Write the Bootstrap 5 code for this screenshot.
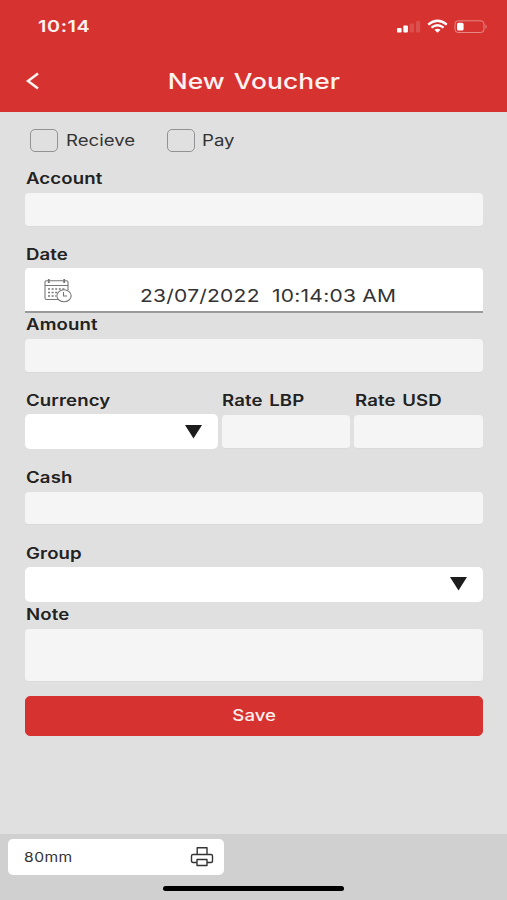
<!DOCTYPE html>
<html lang="en">
<head>
<meta charset="utf-8">
<meta name="viewport" content="width=device-width, initial-scale=1">
<title>New Voucher</title>
<link href="https://cdn.jsdelivr.net/npm/bootstrap@5.3.0/dist/css/bootstrap.min.css" rel="stylesheet">
<style>
  body { font-family: Inter, "Liberation Sans", sans-serif; background: #e0e0e0; color: #222; height: 900px; overflow: hidden; }
  .screen { height: 900px; }
  .top-area { background: #d63230; color: #fff3f1; height: 111.5px; }
  .status-row { height: 52px; padding: 0 19px 0 38px; }
  .title-row { height: 58px; padding: 0 24px; }
  /* wide-set lettering */
  .wide { display: inline-block; transform: scaleX(1.2); transform-origin: left center; white-space: pre; }
  .wide-mid { transform-origin: center; }
  .clock { font-size: 16.5px; font-weight: 600; letter-spacing: .5px; }
  .page-title { font-size: 22px; font-weight: 500; line-height: 28px; word-spacing: 1.5px; letter-spacing: .05px; padding-right: 18px; }
  .form-area { padding: 17px 24.5px 0 25px; }
  .choices { height: 24px; padding-left: 5px; }
  .choice { width: 136.5px; font-size: 15.5px; line-height: 24px; color: #333; }
  .tick-box { width: 28px; height: 23.5px; border: 1.5px solid #929292; border-radius: 5px; margin-right: 7.5px; background: #e0e0e0; }
  .field-label { display: block; height: 22px; line-height: 24px; font-size: 15.5px; font-weight: 600; margin: 0 0 4px .5px; letter-spacing: .1px; word-spacing: 1.5px; white-space: nowrap; }
  .label-tight { margin-bottom: 3px; }
  .first-gap { margin-top: 14.5px; }
  .after-gap { margin-top: 16.5px; }
  .note-gap { margin-top: 1px; }
  .entry { background: #f5f5f5; height: 33.5px; border: 0; border-bottom: 1px solid #dadada; border-radius: 4px; box-sizing: border-box; }
  .pick { background: #fff; height: 35px; border-radius: 5px; }
  .date-box { background: #fff; height: 45px; border-radius: 4px 4px 0 0; border-bottom: 2px solid #979a99; padding-left: 19px; }
  .date-icon { margin-top: 8.5px; }
  .date-text { font-size: 17.5px; line-height: 22px; color: #333; margin: 17px 0 0 66px; letter-spacing: .2px; }
  .currency-row { gap: 4px; margin-top: 16.9px; }
  .col-currency { width: 193px; }
  .col-rate { width: 128.5px; }
  .memo { height: 53.5px; }
  .save { --bs-btn-color: #fff0ee; --bs-btn-bg: #d63230; --bs-btn-border-color: #d63230; height: 40px; border-radius: 5px; font-size: 15.5px; font-weight: 500; padding: 0; line-height: 36px; margin-top: 13.5px; }
  .bottom-area { background: #d0d0d0; height: 66.5px; padding: 5.5px 8px 0; }
  .paper { width: 216px; height: 35.5px; background: #fff; border-radius: 5px; padding: 1px 10px 0 16px; font-size: 13px; color: #333; }
  .paper .wide { letter-spacing: .4px; }
  .home-bar { width: 181px; height: 5.5px; border-radius: 3px; background: #000; margin: 11px auto 0; }
</style>
<script src="https://cdn.jsdelivr.net/npm/bootstrap@5.3.0/dist/js/bootstrap.bundle.min.js"></script>
</head>
<body>
<div class="screen d-flex flex-column">
  <header class="top-area">
    <div class="status-row d-flex align-items-center justify-content-between">
      <span class="wide clock">10:14</span>
      <svg width="92" height="16" viewBox="0 0 92 16">
        <g fill="#fff"><rect x="1" y="10" width="4.6" height="4.5" rx="1"/><rect x="7.3" y="7.5" width="4.6" height="7" rx="1"/></g>
        <g fill="#fff" opacity=".14"><rect x="13.7" y="5.5" width="4.2" height="9" rx="1"/><rect x="20" y="3" width="4.2" height="11.5" rx="1"/></g>
        <g fill="none" stroke="#fff" stroke-width="2.3"><path d="M32.2 6.6Q41.5-1 50.8 6.6"/><path d="M35.4 9.7Q41.5 4.9 47.6 9.7"/></g>
        <path d="M38.4 11.8Q41.5 9.5 44.6 11.8L41.5 14.8Z" fill="#fff"/>
        <rect x="59" y="2.8" width="29" height="11.7" rx="3.2" fill="none" stroke="#fff" stroke-opacity=".42"/>
        <rect x="61" y="4.8" width="6.6" height="7.8" rx="1.6" fill="#fff"/>
        <path d="M89.6 6.2Q91.6 8.6 89.6 11Z" fill="#fff" fill-opacity=".5"/>
      </svg>
    </div>
    <div class="title-row d-flex align-items-center">
      <svg width="18" height="20" viewBox="0 0 18 20"><path d="M14 2.4 4 10l10 7.6" fill="none" stroke="#fff3f1" stroke-width="2.5"/></svg>
      <h1 class="page-title flex-fill text-center m-0"><span class="wide wide-mid">New Voucher</span></h1>
    </div>
  </header>

  <main class="form-area flex-fill">
    <div class="choices d-flex">
      <div class="choice d-flex align-items-center"><span class="tick-box"></span><span class="wide">Recieve</span></div>
      <div class="choice d-flex align-items-center"><span class="tick-box"></span><span class="wide">Pay</span></div>
    </div>
    <div class="first-gap"><label class="field-label"><span class="wide">Account</span></label><div class="entry"></div></div>
    <div class="after-gap"><label class="field-label label-tight"><span class="wide">Date</span></label>
      <div class="date-box d-flex">
        <svg class="date-icon" width="30" height="28" viewBox="0 0 30 28" fill="none" stroke="#777" stroke-width="1.1">
          <path d="M16.5 22.5H2.5Q1 22.5 1 21V5Q1 3.8 2.5 3.8H22.5Q24 3.8 24 5V13M1 8.5H24"/>
          <path d="M4.8 2v4M20.2 2v4" stroke-width="1.8"/>
          <path d="M4 12h17M4 15.5h10M4 19h8" stroke-width="1.6" stroke-dasharray="2 1.6"/>
          <ellipse cx="20" cy="18.8" rx="7.2" ry="6" fill="#fff"/>
          <path d="M19.5 15v4h3.6"/>
        </svg>
        <div class="date-text"><span class="wide">23/07/2022  10:14:03 AM</span></div>
      </div>
    </div>
    <div><label class="field-label"><span class="wide">Amount</span></label><div class="entry"></div></div>
    <div class="currency-row d-flex">
      <div class="col-currency"><label class="field-label label-tight"><span class="wide">Currency</span></label>
        <div class="pick d-flex align-items-center justify-content-end pe-3"><svg width="17" height="14" viewBox="0 0 17 14"><path d="M0 0H17L8.5 13.6Z" fill="#1c1c1c"/></svg></div></div>
      <div class="col-rate"><label class="field-label"><span class="wide">Rate LBP</span></label><div class="entry"></div></div>
      <div class="col-rate"><label class="field-label"><span class="wide">Rate USD</span></label><div class="entry"></div></div>
    </div>
    <div class="after-gap"><label class="field-label"><span class="wide">Cash</span></label><div class="entry"></div></div>
    <div class="after-gap"><label class="field-label label-tight"><span class="wide">Group</span></label>
      <div class="pick d-flex align-items-center justify-content-end pe-3"><svg width="17" height="14" viewBox="0 0 17 14"><path d="M0 0H17L8.5 13.6Z" fill="#1c1c1c"/></svg></div></div>
    <div class="note-gap"><label class="field-label"><span class="wide">Note</span></label><div class="entry memo"></div></div>
    <button class="btn save w-100 d-block"><span class="wide wide-mid">Save</span></button>
  </main>

  <footer class="bottom-area">
    <div class="paper d-flex align-items-center justify-content-between">
      <span class="wide">80mm</span>
      <svg width="24" height="20" viewBox="0 0 24 20" fill="none" stroke="#333" stroke-width="1.4" stroke-linejoin="round">
        <path d="M7.2 7.5V.8H17V7.5M6.5 15.5H3Q1.5 15.5 1.5 14V9Q1.5 7.5 3 7.5H21Q22.5 7.5 22.5 9V14Q22.5 15.5 21 15.5H17.5M7 12.5H17V18.5H7Z"/>
      </svg>
    </div>
    <div class="home-bar"></div>
  </footer>
</div>
</body>
</html>
